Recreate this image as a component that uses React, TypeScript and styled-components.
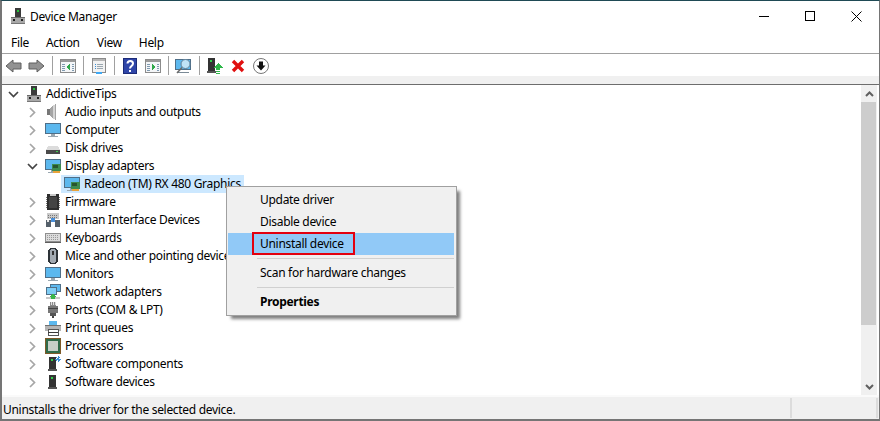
import styled, { createGlobalStyle } from 'styled-components'
import type { ReactNode } from 'react'

const GlobalStyle = createGlobalStyle`
  html, body {
    margin: 0;
    padding: 0;
    overflow: hidden;
    background: #fff;
  }
`

const Win = styled.div`
  position: relative;
  width: 880px;
  height: 421px;
  box-sizing: border-box;
  display: flex;
  flex-direction: column;
  background: #fff;
  border-top: 1px solid #1f4a55;
  border-left: 2px solid #757575;
  border-right: 1px solid #757575;
  border-bottom: 2px solid #757575;
  font-family: "Noto Sans", "Open Sans", sans-serif;
  font-size: 12px;
  letter-spacing: -0.3px;
  color: #000;
`

const TitleBar = styled.div`
  height: 30px;
  flex: none;
  display: flex;
  align-items: center;
  padding-left: 8px;
`

const TitleText = styled.span`
  margin-left: 4px;
  flex: 1;
`

const Caption = styled.div`
  width: 46px;
  height: 30px;
  display: flex;
  align-items: center;
  justify-content: center;
`

const MenuBar = styled.div`
  height: 22px;
  flex: none;
  display: flex;
  align-items: center;
  padding-left: 9px;
  gap: 17px;
  border-bottom: 1px solid #a0a0a0;
`

const ToolBar = styled.div`
  height: 22px;
  flex: none;
  display: flex;
  align-items: center;
`

const ToolBtn = styled.div`
  width: 23px;
  height: 22px;
  box-sizing: border-box;
  padding-top: 2px;
  display: flex;
  align-items: center;
  justify-content: center;
`

const ToolSep = styled.div`
  width: 8px;
  height: 22px;
  display: flex;
  justify-content: center;
  align-items: center;
  &::before {
    content: "";
    width: 1px;
    height: 19px;
    background: #a0a0a0;
  }
`

const Strip = styled.div`
  height: 8px;
  flex: none;
  background: #f0f0f0;
  border-bottom: 1px solid #6d6d6d;
`

const Body = styled.div`
  flex: 1;
  min-height: 0;
  display: flex;
`

const Tree = styled.div`
  flex: 1;
  min-width: 0;
  overflow: hidden;
`

const Row = styled.div<{ $depth: number }>`
  height: 18px;
  display: flex;
  align-items: center;
  white-space: nowrap;
  padding-left: ${p => 2 + p.$depth * 19}px;
`

const Chevron = styled.div`
  width: 22px;
  flex: none;
  height: 18px;
  display: flex;
  align-items: center;
  justify-content: center;
  padding-right: 3px;
  box-sizing: border-box;
`

const Item = styled.div<{ $selected?: boolean }>`
  display: flex;
  align-items: center;
  height: 18px;
  gap: 4px;
  margin-left: ${p => (p.$selected ? '38px' : '0')};
  padding: ${p => (p.$selected ? '0 3px' : '0')};
  background: ${p => (p.$selected ? '#cce8ff' : 'transparent')};
`

const Label = styled.span`
  padding-bottom: 2px;
`

const Scroll = styled.div`
  width: 16px;
  flex: none;
  margin-right: 2px;
  background: #f0f0f0;
  display: flex;
  flex-direction: column;
`

const ScrollBtn = styled.div`
  height: 17px;
  flex: none;
  display: flex;
  align-items: center;
  justify-content: center;
`

const Thumb = styled.div`
  height: 223px;
  flex: none;
  margin-right: 1px;
  background: #cdcdcd;
`

const ScrollTrack = styled.div`
  flex: 1;
`

const Status = styled.div`
  height: 22px;
  flex: none;
  display: flex;
  align-items: center;
  background: #f0f0f0;
  border-top: 2px solid #fafafa;
  padding-right: 1px;
`

const StatusCell = styled.div<{ $w?: number }>`
  height: 20px;
  display: flex;
  align-items: center;
  box-sizing: border-box;
  padding: 2px 0 0 1px;
  border-right: 2px solid #dcdcdc;
  ${p => (p.$w ? `width: ${p.$w}px; flex: none;` : 'flex: 1;')}
`

const Menu = styled.div`
  position: absolute;
  left: 224px;
  top: 185px;
  width: 231px;
  height: 130px;
  box-sizing: border-box;
  background: #f0f0f0;
  border: 1px solid #a0a0a0;
  box-shadow: 4px 4px 3px -1px rgba(0, 0, 0, 0.5);
  padding: 2px 2px 2px 1px;
`

const MenuItem = styled.div<{ $hot?: boolean; $bold?: boolean }>`
  position: relative;
  height: 22px;
  box-sizing: border-box;
  display: flex;
  align-items: center;
  padding: 0 0 2px 32px;
  background: ${p => (p.$hot ? '#91c9f7' : 'transparent')};
  font-weight: ${p => (p.$bold ? 700 : 400)};
`

const MenuSep = styled.div`
  height: 1px;
  margin: 3px 0 3px 29px;
  background: #d0d0d0;
`

const RedBox = styled.div`
  position: absolute;
  left: 24px;
  top: -1px;
  width: 103px;
  height: 23px;
  box-sizing: border-box;
  border: 2px solid #e3000f;
`

const Svg = ({ children, size = 16 }: { children: ReactNode; size?: number }) => (
  <svg width={size} height={size} viewBox="0 0 16 16" shapeRendering="crispEdges" style={{ flex: 'none', display: 'block' }}>
    {children}
  </svg>
)

const Tower = () => (
  <Svg>
    <rect x="5" y="0" width="6" height="9" fill="#3a3a3a" />
    <rect x="7" y="2" width="2" height="2" fill="#25c23a" />
    <rect x="1" y="9" width="14" height="6" fill="#a8a8a8" />
    <rect x="1" y="9" width="14" height="1" fill="#6a6a6a" />
    <rect x="3" y="11" width="2" height="2" fill="#222" />
    <rect x="11" y="11" width="2" height="2" fill="#222" />
    <rect x="1" y="15" width="14" height="1" fill="#777" />
  </Svg>
)

const Speaker = () => (
  <Svg>
    <polygon points="2,5 5,5 8,1 11,0 11,16 8,15 5,11 2,11" fill="#a4a4a4" />
    <rect x="2" y="5" width="3" height="6" fill="#777" />
    <rect x="8" y="1" width="2" height="14" fill="#d4d4d4" />
  </Svg>
)

const Monitor = ({ badge }: { badge?: boolean }) => (
  <Svg>
    <rect x="0" y="1" width="16" height="11" fill="#4f6f88" />
    <rect x="1" y="2" width="14" height="9" fill="#5cb8ee" />
    <rect x="6" y="12" width="4" height="2" fill="#9aa7b0" />
    <rect x="3" y="14" width="10" height="1" fill="#9aa7b0" />
    {badge && (
      <>
        <rect x="7" y="6" width="9" height="7" fill="#3d8a4e" />
        <rect x="8" y="7" width="5" height="3" fill="#27552f" />
        <rect x="8" y="13" width="7" height="2" fill="#e8a33a" />
      </>
    )}
  </Svg>
)

const Disk = () => (
  <Svg>
    <polygon points="3,6 13,6 15,10 1,10" fill="#dcdcdc" />
    <rect x="1" y="10" width="14" height="4" fill="#4a4a4a" />
    <rect x="11" y="11" width="2" height="1" fill="#3fd04f" />
  </Svg>
)

const Chip = () => (
  <Svg>
    <rect x="2" y="0" width="12" height="16" fill="#2e2e2e" />
    <rect x="5" y="0" width="6" height="2" fill="#c8c8c8" />
    <path d="M1 3h1M1 5h1M1 7h1M1 9h1M1 11h1M1 13h1M14 3h1M14 5h1M14 7h1M14 9h1M14 11h1M14 13h1" stroke="#777" />
    <rect x="4" y="3" width="8" height="11" fill="#444" />
  </Svg>
)

const Hid = () => (
  <Svg>
    <rect x="2" y="1" width="12" height="6" fill="#c9c9c9" />
    <path d="M3 3h10M3 5h10" stroke="#777" strokeDasharray="1 1" />
    <rect x="1" y="8" width="5" height="7" fill="#55606a" />
    <rect x="10" y="8" width="5" height="7" fill="#55606a" />
    <rect x="6" y="6" width="4" height="4" fill="#4a8fd8" />
    <rect x="2" y="8" width="2" height="2" fill="#e8e8e8" />
  </Svg>
)

const Keyboard = () => (
  <Svg>
    <rect x="0" y="3" width="16" height="9" fill="#8f8f8f" />
    <rect x="1" y="4" width="14" height="7" fill="#dcdcdc" />
    <path d="M2 5h12M2 7h12M2 9h12" stroke="#9a9a9a" strokeDasharray="1 1" />
    <rect x="0" y="12" width="16" height="1" fill="#5f5f5f" />
  </Svg>
)

const Mouse = () => (
  <Svg>
    <rect x="3" y="0" width="10" height="16" rx="4" fill="#2d3338" />
    <rect x="5" y="1" width="6" height="14" rx="3" fill="#a2aab2" />
    <rect x="7" y="3" width="2" height="4" fill="#333" />
  </Svg>
)

const Network = () => (
  <Svg>
    <rect x="5" y="0" width="11" height="8" fill="#4f6f88" />
    <rect x="6" y="1" width="9" height="6" fill="#5cb8ee" />
    <rect x="1" y="3" width="11" height="8" fill="#4f6f88" />
    <rect x="2" y="4" width="9" height="6" fill="#7fcdf5" />
    <rect x="1" y="13" width="14" height="2" fill="#c8c8c8" />
    <polygon points="8,10 12,13 10,13 10,15 6,15 6,13 4,13" fill="#39b54a" />
  </Svg>
)

const Port = () => (
  <Svg>
    <rect x="5" y="0" width="6" height="4" fill="#8a8a8a" />
    <path d="M6 0v3M8 0v3M10 0v3" stroke="#e0e0e0" />
    <rect x="3" y="4" width="10" height="7" fill="#777" />
    <rect x="3" y="6" width="10" height="1" fill="#444" />
    <rect x="5" y="11" width="6" height="3" fill="#555" />
    <rect x="7" y="14" width="2" height="2" fill="#444" />
  </Svg>
)

const Printer = () => (
  <Svg>
    <rect x="4" y="1" width="8" height="4" fill="#5cb8ee" />
    <rect x="0" y="5" width="16" height="6" fill="#b4b4b4" />
    <rect x="0" y="5" width="16" height="1" fill="#707070" />
    <rect x="3" y="9" width="10" height="6" fill="#fff" stroke="#555" />
    <rect x="3" y="12" width="10" height="1" fill="#3a3a3a" />
  </Svg>
)

const Cpu = () => (
  <Svg>
    <rect x="0" y="0" width="16" height="16" fill="#7d5a28" />
    <rect x="1" y="1" width="14" height="14" fill="#2f6b4a" />
    <rect x="3" y="3" width="10" height="10" fill="#c6cfc8" />
  </Svg>
)

const SoftTower = ({ star }: { star?: boolean }) => (
  <Svg>
    <rect x="4" y="1" width="7" height="12" fill="#333" />
    <rect x="6" y="3" width="2" height="2" fill="#2fd04a" />
    <rect x="3" y="13" width="9" height="2" fill="#555" />
    {star && <path d="M13 0v6M10 3h6M11 1l4 4M15 1l-4 4" stroke="#3a8fd8" />}
  </Svg>
)

const ChevRight = () => (
  <svg width="7" height="11" viewBox="0 0 7 11" style={{ display: 'block' }}>
    <path d="M1 1l4.5 4.5L1 10" fill="none" stroke="#a6a6a6" strokeWidth="1.7" />
  </svg>
)

const ChevDown = () => (
  <svg width="11" height="7" viewBox="0 0 11 7" style={{ display: 'block' }}>
    <path d="M1 1l4.5 4.5L10 1" fill="none" stroke="#444" strokeWidth="1.7" />
  </svg>
)

const NavArrow = ({ flip }: { flip?: boolean }) => (
  <svg width="17" height="14" viewBox="0 0 17 14" style={{ transform: flip ? 'scaleX(-1)' : undefined, display: 'block' }}>
    <polygon points="1,7 8,1 8,4 16,4 16,10 8,10 8,13" fill="#929292" stroke="#5f5f5f" />
  </svg>
)

const PaneIcon = ({ dir }: { dir: 'left' | 'right' }) => (
  <Svg>
    <rect x="0.5" y="1.5" width="15" height="13" fill="#f4f6f8" stroke="#8b8b8b" shapeRendering="crispEdges" />
    <rect x="1" y="2" width="14" height="2" fill="#9a9a9a" />
    <path d="M2 6h3M2 8h3M2 10h3M2 12h3M12 6h2M12 8h2M12 10h2M12 12h2" stroke="#7f9ab0" />
    {dir === 'left'
      ? <polygon points="10,6 10,12 6,9" fill="#2fa84a" />
      : <polygon points="7,6 7,12 11,9" fill="#2fa84a" />}
  </Svg>
)

const PropsIcon = () => (
  <Svg>
    <rect x="1.5" y="0.5" width="13" height="14" fill="#f2f2f2" stroke="#8b8b8b" />
    <rect x="2" y="1" width="12" height="2" fill="#b5b5b5" />
    <path d="M4 6h1M4 8h1M4 10h1" stroke="#3a8fd8" />
    <path d="M6 6h6M6 8h6M6 10h6" stroke="#9aa7b0" />
    <rect x="5" y="14" width="6" height="2" fill="#3fa9f5" />
  </Svg>
)

const HelpIcon = () => (
  <svg width="14" height="16" viewBox="0 0 14 16" style={{ display: 'block' }}>
    <rect width="14" height="16" fill="#2f45a8" />
    <rect x="0.5" y="0.5" width="13" height="15" fill="none" stroke="#1c2c78" />
    <path d="M4.5 5.5c0-3.5 5.5-3.5 5.5 0 0 2.5-3 2.5-3 5" fill="none" stroke="#fff" strokeWidth="2" />
    <rect x="6" y="12" width="2" height="2" fill="#fff" />
  </svg>
)

const ScanIcon = () => (
  <svg width="17" height="16" viewBox="0 0 17 16" style={{ display: 'block' }}>
    <rect x="0.5" y="1.5" width="15" height="10" fill="#5cb8ee" stroke="#4f6f88" strokeWidth="1" />
    <rect x="3" y="14" width="11" height="1" fill="#7a8a96" />
    <circle cx="10.5" cy="6" r="4.5" fill="#bfe3f7" stroke="#5f7f98" />
    <path d="M7 9.5L2 15" stroke="#6b6b6b" strokeWidth="1.6" />
  </svg>
)

const UpdateIcon = () => (
  <Svg>
    <rect x="1" y="0" width="7" height="13" fill="#333" />
    <rect x="3" y="2" width="2" height="2" fill="#2fd04a" />
    <rect x="0" y="13" width="9" height="2" fill="#555" />
    <polygon points="11,5 16,10 13,10 13,12 9,12 9,10 6,10" fill="#2fb84a" />
    <rect x="9" y="13" width="4" height="1" fill="#2fb84a" />
    <rect x="9" y="15" width="4" height="1" fill="#2fb84a" />
  </Svg>
)

const RemoveIcon = () => (
  <svg width="14" height="14" viewBox="0 0 14 14" style={{ display: 'block' }}>
    <path d="M2 2l10 10M12 2L2 12" stroke="#e01010" strokeWidth="3.4" />
  </svg>
)

const DownloadIcon = () => (
  <svg width="16" height="16" viewBox="0 0 16 16" style={{ display: 'block' }}>
    <circle cx="8" cy="8" r="7.5" fill="#fff" stroke="#777" />
    <polygon points="6,3.5 10,3.5 10,7.5 12.5,7.5 8,12.5 3.5,7.5 6,7.5" fill="#111" />
  </svg>
)

const devices: { label: string; icon: ReactNode; open?: boolean }[] = [
  { label: 'Audio inputs and outputs', icon: <Speaker /> },
  { label: 'Computer', icon: <Monitor /> },
  { label: 'Disk drives', icon: <Disk /> },
  { label: 'Display adapters', icon: <Monitor badge />, open: true },
  { label: 'Firmware', icon: <Chip /> },
  { label: 'Human Interface Devices', icon: <Hid /> },
  { label: 'Keyboards', icon: <Keyboard /> },
  { label: 'Mice and other pointing devices', icon: <Mouse /> },
  { label: 'Monitors', icon: <Monitor /> },
  { label: 'Network adapters', icon: <Network /> },
  { label: 'Ports (COM & LPT)', icon: <Port /> },
  { label: 'Print queues', icon: <Printer /> },
  { label: 'Processors', icon: <Cpu /> },
  { label: 'Software components', icon: <SoftTower star /> },
  { label: 'Software devices', icon: <SoftTower /> },
]

export default function App() {
  return (
    <Win>
      <GlobalStyle />
      <TitleBar>
        <Tower />
        <TitleText>Device Manager</TitleText>
        <Caption>
          <svg width="10" height="10" viewBox="0 0 10 10"><path d="M0 5.5h10" stroke="#000" /></svg>
        </Caption>
        <Caption>
          <svg width="10" height="10" viewBox="0 0 10 10"><rect x="0.5" y="0.5" width="9" height="9" fill="none" stroke="#000" /></svg>
        </Caption>
        <Caption>
          <svg width="11" height="11" viewBox="0 0 11 11"><path d="M0.5 0.5l10 10M10.5 0.5l-10 10" stroke="#000" /></svg>
        </Caption>
      </TitleBar>
      <MenuBar>
        <span>File</span>
        <span>Action</span>
        <span>View</span>
        <span>Help</span>
      </MenuBar>
      <ToolBar>
        <ToolBtn><NavArrow /></ToolBtn>
        <ToolBtn><NavArrow flip /></ToolBtn>
        <ToolSep />
        <ToolBtn><PaneIcon dir="left" /></ToolBtn>
        <ToolSep />
        <ToolBtn><PropsIcon /></ToolBtn>
        <ToolSep />
        <ToolBtn><HelpIcon /></ToolBtn>
        <ToolBtn><PaneIcon dir="right" /></ToolBtn>
        <ToolSep />
        <ToolBtn><ScanIcon /></ToolBtn>
        <ToolSep />
        <ToolBtn><UpdateIcon /></ToolBtn>
        <ToolBtn><RemoveIcon /></ToolBtn>
        <ToolBtn><DownloadIcon /></ToolBtn>
      </ToolBar>
      <Strip />
      <Body>
        <Tree>
          <Row $depth={0}>
            <Chevron><ChevDown /></Chevron>
            <Item><Tower /><Label>AddictiveTips</Label></Item>
          </Row>
          {devices.map(d => (
            <div key={d.label}>
              <Row $depth={1}>
                <Chevron>{d.open ? <ChevDown /> : <ChevRight />}</Chevron>
                <Item>{d.icon}<Label>{d.label}</Label></Item>
              </Row>
              {d.open && (
                <Row $depth={1}>
                  <Item $selected><Monitor badge /><Label>Radeon (TM) RX 480 Graphics</Label></Item>
                </Row>
              )}
            </div>
          ))}
        </Tree>
        <Scroll>
          <ScrollBtn>
            <svg width="9" height="6" viewBox="0 0 9 6"><path d="M1 5l3.5-3.5L8 5" fill="none" stroke="#606060" strokeWidth="2" /></svg>
          </ScrollBtn>
          <Thumb />
          <ScrollTrack />
          <ScrollBtn>
            <svg width="9" height="6" viewBox="0 0 9 6"><path d="M1 1l3.5 3.5L8 1" fill="none" stroke="#606060" strokeWidth="2" /></svg>
          </ScrollBtn>
        </Scroll>
      </Body>
      <Status>
        <StatusCell $w={790}>Uninstalls the driver for the selected device.</StatusCell>
        <StatusCell />
      </Status>
      <Menu>
        <MenuItem>Update driver</MenuItem>
        <MenuItem>Disable device</MenuItem>
        <MenuItem $hot>
          Uninstall device
          <RedBox />
        </MenuItem>
        <MenuSep />
        <MenuItem>Scan for hardware changes</MenuItem>
        <MenuSep />
        <MenuItem $bold>Properties</MenuItem>
      </Menu>
    </Win>
  )
}
